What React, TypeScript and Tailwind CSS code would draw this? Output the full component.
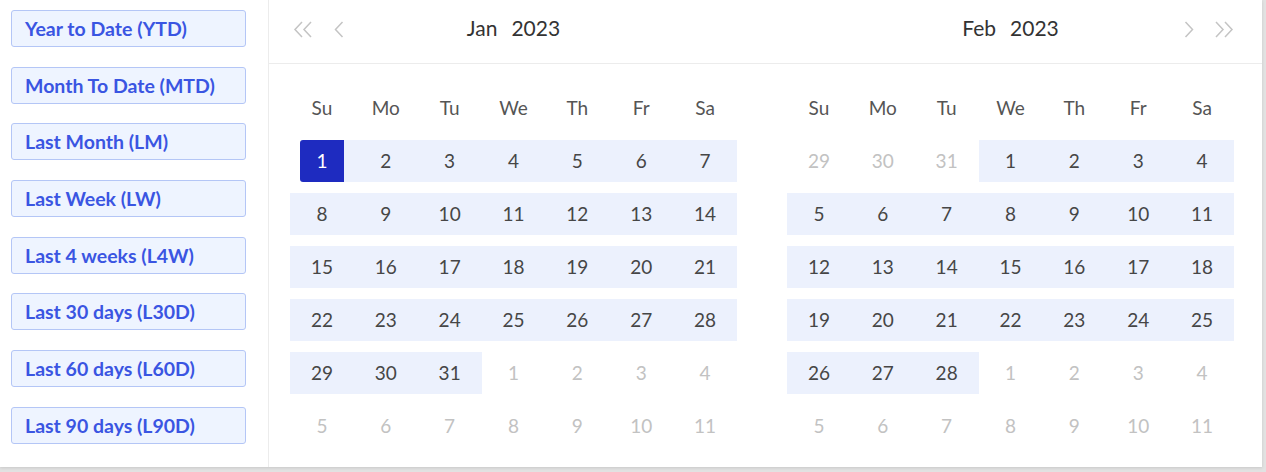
import React from "react";

type Day = { n: number; muted: boolean };

const presets = [
  "Year to Date (YTD)",
  "Month To Date (MTD)",
  "Last Month (LM)",
  "Last Week (LW)",
  "Last 4 weeks (L4W)",
  "Last 30 days (L30D)",
  "Last 60 days (L60D)",
  "Last 90 days (L90D)",
];

const weekDays = ["Su", "Mo", "Tu", "We", "Th", "Fr", "Sa"];

function buildMonth(lead: number[], count: number, trail: number): Day[] {
  const days: Day[] = lead.map((n) => ({ n, muted: true }));
  for (let i = 1; i <= count; i++) days.push({ n: i, muted: false });
  for (let i = 1; i <= trail; i++) days.push({ n: i, muted: true });
  return days;
}

const jan = buildMonth([], 31, 11);
const feb = buildMonth([29, 30, 31], 28, 11);

function DoubleLeft() {
  return (
    <svg width="20" height="17" viewBox="0 0 20 17" fill="none" stroke="#c4c4c4" strokeWidth="1.5">
      <path d="M9 1 L2 8.5 L9 16" />
      <path d="M18 1 L11 8.5 L18 16" />
    </svg>
  );
}

function SingleLeft() {
  return (
    <svg width="10" height="17" viewBox="0 0 10 17" fill="none" stroke="#c4c4c4" strokeWidth="1.5">
      <path d="M8.5 1 L1.5 8.5 L8.5 16" />
    </svg>
  );
}

function SingleRight() {
  return (
    <svg width="10" height="17" viewBox="0 0 10 17" fill="none" stroke="#c4c4c4" strokeWidth="1.5">
      <path d="M1.5 1 L8.5 8.5 L1.5 16" />
    </svg>
  );
}

function DoubleRight() {
  return (
    <svg width="20" height="17" viewBox="0 0 20 17" fill="none" stroke="#c4c4c4" strokeWidth="1.5">
      <path d="M2 1 L9 8.5 L2 16" />
      <path d="M11 1 L18 8.5 L11 16" />
    </svg>
  );
}

function MonthGrid({ days, selected }: { days: Day[]; selected?: number }) {
  return (
    <div className="grid w-[447px] grid-cols-7 gap-y-[11px]">
      {weekDays.map((d) => (
        <div key={d} className="flex h-[42px] items-center justify-center text-[19px] text-[#555]">
          {d}
        </div>
      ))}
      {days.map((d, i) => {
        if (d.muted) {
          return (
            <div key={i} className="flex h-[42px] items-center justify-center text-[19px] text-[#c2c2c2]">
              {d.n}
            </div>
          );
        }
        if (d.n === selected) {
          return (
            <div
              key={i}
              className="flex h-[42px] items-center justify-center bg-[linear-gradient(to_right,transparent_50%,#ecf1fd_50%)]"
            >
              <span className="flex h-[42px] w-[44px] items-center justify-center rounded-l-[3px] bg-[#1e2bc0] text-[19px] text-white">
                {d.n}
              </span>
            </div>
          );
        }
        return (
          <div key={i} className="flex h-[42px] items-center justify-center bg-[#ecf1fd] text-[19px] text-[#464646]">
            {d.n}
          </div>
        );
      })}
    </div>
  );
}

export default function App() {
  return (
    <div className="h-[472px] w-[1266px] overflow-hidden bg-[#e2e2e2] font-['Lato',sans-serif]">
      <div className="flex h-[467px] w-[1262px] bg-white shadow-[0_1px_3px_rgba(0,0,0,0.12)]">
        <aside className="flex w-[269px] shrink-0 flex-col gap-[19.7px] border-r border-[#ececec] pl-[11px] pt-[10px]">
          {presets.map((p) => (
            <button
              key={p}
              className="flex h-[37px] w-[235px] items-center rounded-[3px] border border-[#b4c6f6] bg-[#eef4ff] pl-[13px] text-left text-[19.5px] font-bold text-[#3a55e2]"
            >
              {p}
            </button>
          ))}
        </aside>

        <div className="flex flex-1 flex-col">
          <div className="flex h-[64px] gap-[50px] border-b border-[#ececec] pb-[7px] pl-[21px]">
            <div className="grid w-[447px] grid-cols-[1fr_auto_1fr] items-center">
              <div className="flex items-center gap-[21px] pl-[3px] pt-[3px]">
                <DoubleLeft />
                <SingleLeft />
              </div>
              <div className="flex gap-[14px] text-[21px] text-[#333]">
                <span>Jan</span>
                <span>2023</span>
              </div>
              <div />
            </div>
            <div className="grid w-[447px] grid-cols-[1fr_auto_1fr] items-center">
              <div />
              <div className="flex gap-[14px] text-[21px] text-[#333]">
                <span>Feb</span>
                <span>2023</span>
              </div>
              <div className="flex items-center justify-end gap-[20px] pt-[3px]">
                <SingleRight />
                <DoubleRight />
              </div>
            </div>
          </div>

          <div className="flex gap-[50px] pl-[21px] pt-[23px]">
            <MonthGrid days={jan} selected={1} />
            <MonthGrid days={feb} />
          </div>
        </div>
      </div>
    </div>
  );
}
